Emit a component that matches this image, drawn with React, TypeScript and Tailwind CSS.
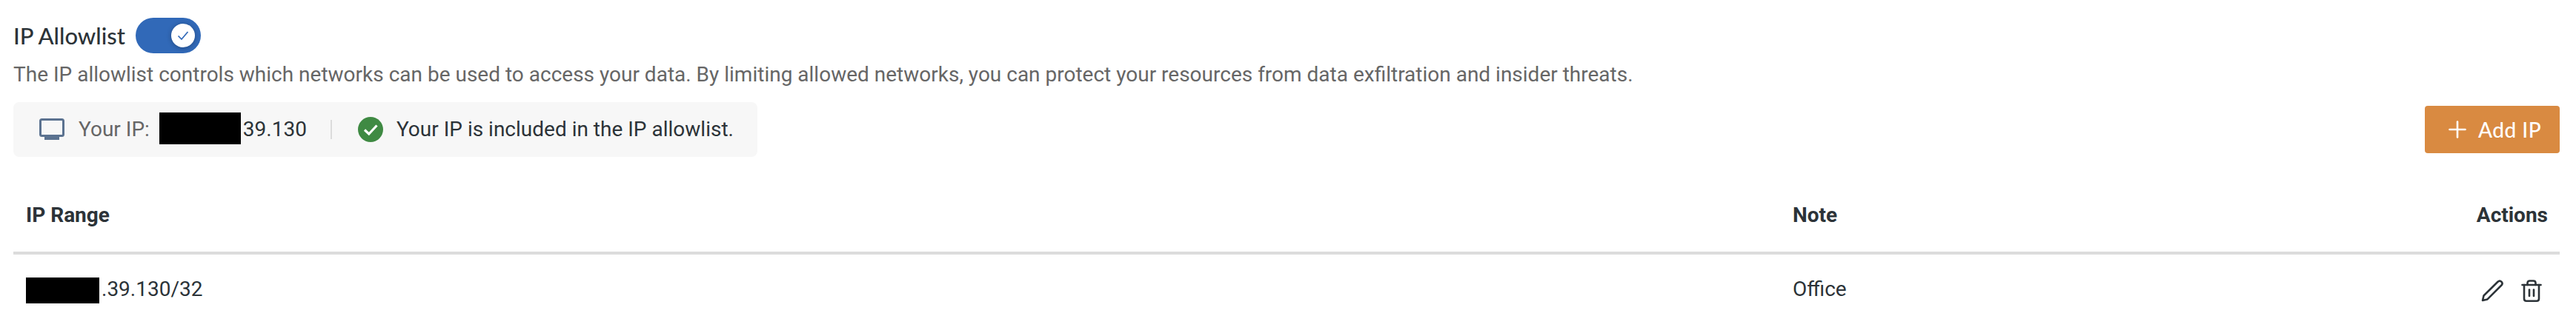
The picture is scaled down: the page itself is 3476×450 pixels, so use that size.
import React from 'react';

const roboto = "font-['Roboto',sans-serif]";
const lato = "font-['Lato',sans-serif]";

const Toggle = () => (
  <div className="flex h-12 w-[88px] items-center justify-end rounded-full bg-[#3169b8] pr-2">
    <div className="flex h-8 w-8 items-center justify-center rounded-full bg-white shadow-[0_1px_6px_rgba(0,0,0,0.3)]">
      <svg viewBox="0 0 16 16" className="h-4 w-4" fill="none" stroke="#3169b8" strokeWidth="1.7">
        <path d="M1.5 8.5 L6 13 L14.5 3" />
      </svg>
    </div>
  </div>
);

const MonitorIcon = () => (
  <svg viewBox="0 0 34 30" className="h-[30px] w-[34px]" fill="none">
    <rect x="1.5" y="1.5" width="31" height="22" rx="2" stroke="#5b7290" strokeWidth="3" />
    <rect x="7" y="25" width="20" height="4" fill="#5b7290" />
  </svg>
);

const CheckCircle = () => (
  <svg viewBox="0 0 34 34" className="h-[34px] w-[34px]" fill="none">
    <circle cx="17" cy="17" r="17" fill="#3f8a43" />
    <path d="M9 17.5 L14.8 23 L25.5 11.5" stroke="white" strokeWidth="3.2" />
  </svg>
);

const PencilIcon = () => (
  <svg viewBox="0 0 30 30" className="h-[30px] w-[30px]" fill="none" stroke="#2c3338" strokeWidth="2.6" strokeLinejoin="round">
    <path d="M2 28 L3.5 21.5 L22.5 2.8 C24 1.4 26 1.4 27.4 2.7 C28.8 4.1 28.8 6 27.4 7.5 L8.5 26.4 Z" />
  </svg>
);

const TrashIcon = () => (
  <svg viewBox="0 0 28 30" className="h-[30px] w-[28px]" fill="none" stroke="#2c3338" strokeWidth="2.6" strokeLinecap="round" strokeLinejoin="round">
    <path d="M1.5 7 H26.5" />
    <path d="M4 7 V25.5 C4 27.5 5.2 28.7 7 28.7 H21 C22.8 28.7 24 27.5 24 25.5 V7" />
    <path d="M8.5 7 V4.5 C8.5 2.6 9.8 1.5 11.5 1.5 H16.5 C18.2 1.5 19.5 2.6 19.5 4.5 V7" />
    <path d="M11 13.5 V22" />
    <path d="M17 13.5 V22" />
  </svg>
);

const PlusIcon = () => (
  <svg viewBox="0 0 24 24" className="h-6 w-6" fill="none" stroke="white" strokeWidth="2.6" strokeLinecap="round">
    <path d="M12 1.5 V22.5" />
    <path d="M1.5 12 H22.5" />
  </svg>
);

export default function App() {
  return (
    <div className={`h-[450px] w-[3476px] overflow-hidden bg-white pl-[18px] pr-[22px] pt-6 text-[#2c3338] ${roboto}`}>
      <div className="flex h-12 items-center">
        <h2 className={`w-[165px] text-[31px] font-medium leading-none ${lato}`}>IP Allowlist</h2>
        <Toggle />
      </div>

      <p className="mt-[13px] text-[28px] leading-[32px] text-[#666666]">
        The IP allowlist controls which networks can be used to access your data. By limiting allowed networks, you can protect your resources from data exfiltration and insider threats.
      </p>

      <div className="mt-[21px] flex items-center justify-between">
        <div className="flex h-[74px] w-[1004px] items-center rounded-lg bg-[#f7f7f7] pl-[35px] text-[28px]">
          <MonitorIcon />
          <span className="ml-[19px] text-[#666666]">Your IP:</span>
          <span className="mb-[3px] ml-[13px] h-[43px] w-[110px] bg-black" />
          <span className="ml-[3px]">39.130</span>
          <span className="ml-[32px] h-[26px] w-0.5 bg-[#dcdcdc]" />
          <span className="ml-[35px] flex"><CheckCircle /></span>
          <span className="ml-[18px]">Your IP is included in the IP allowlist.</span>
        </div>
        <button className={`flex h-16 w-[182px] items-center gap-4 rounded bg-[#d98a41] pl-8 text-[28px] font-medium tracking-[0.5px] text-white ${lato}`}>
          <PlusIcon />
          Add IP
        </button>
      </div>

      <div className="mt-[39px]">
        <div className="flex h-[93px] items-center border-b-4 border-[#dcdcdc] pb-[9px] text-[28px] font-bold">
          <div className="w-[2401px] pl-[17px]">IP Range</div>
          <div className="flex-1">Note</div>
          <div className="pr-4">Actions</div>
        </div>
        <div className="flex h-[94px] items-center text-[28px]">
          <div className="flex w-[2401px] items-center pl-[17px]">
            <span className="mt-[3px] h-[35px] w-[99px] bg-black" />
            <span className="ml-[3px]">.39.130/32</span>
          </div>
          <div className="flex-1">Office</div>
          <div className="mt-1 flex items-center gap-6 pr-6">
            <PencilIcon />
            <TrashIcon />
          </div>
        </div>
      </div>
    </div>
  );
}
